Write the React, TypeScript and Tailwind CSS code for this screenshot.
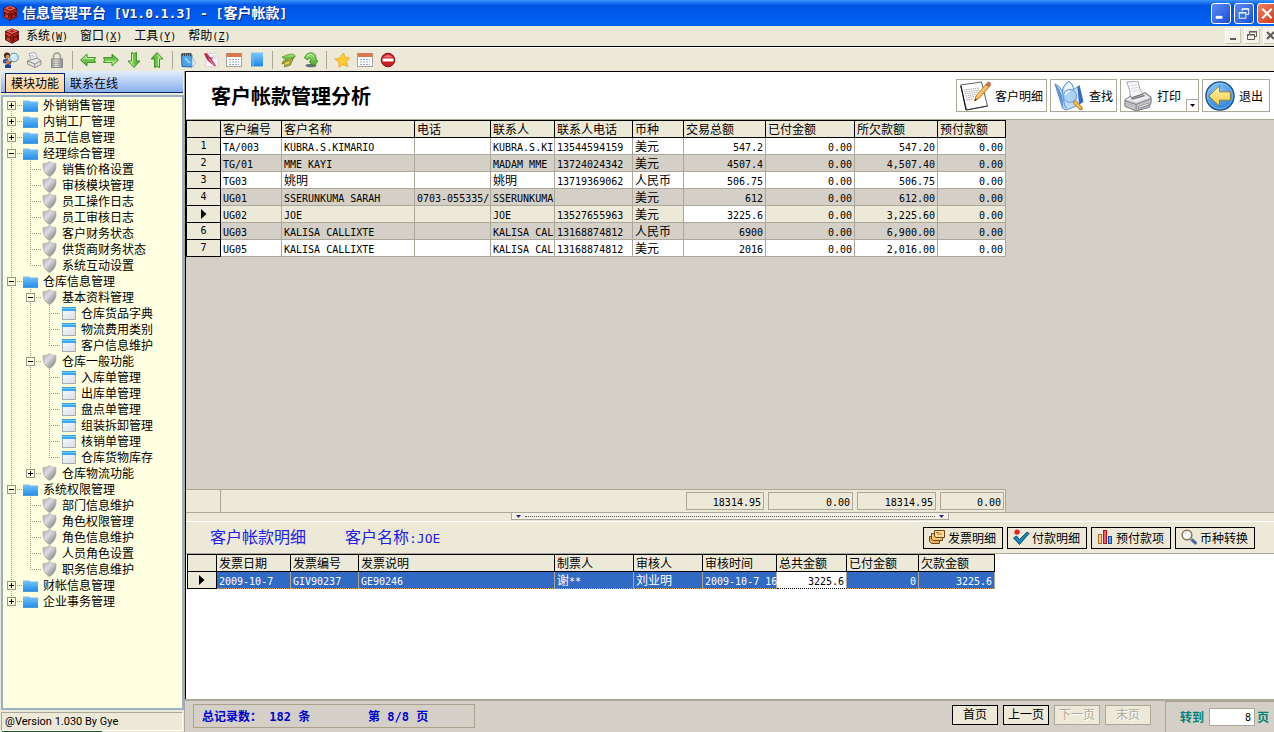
import React, { useState } from "react";

const CJK = "font-['Noto_Sans_CJK_SC',sans-serif]";

/* Renders ideographs and half-width characters with their own face and size. */
function Mixed({ text, latin = "text-[10px]" }: { text: string; latin?: string }) {
  const parts = text.match(/[\x20-\x7e]+|[^\x20-\x7e]+/g) ?? [];
  return (
    <>
      {parts.map((part, i) =>
        /^[\x20-\x7e]/.test(part) ? (
          <span key={i} className={`whitespace-pre font-['DejaVu_Sans_Mono',monospace] ${latin}`}>
            {part}
          </span>
        ) : (
          <span key={i}>{part}</span>
        )
      )}
    </>
  );
}

function Defs() {
  return (
    <svg className="absolute h-0 w-0" aria-hidden="true">
      <defs>
        <linearGradient id="folder" x1="0" y1="0" x2="0" y2="1">
          <stop offset="0" stopColor="#7cc8fc" />
          <stop offset="1" stopColor="#1c88e8" />
        </linearGradient>
        <linearGradient id="shield" x1="0" y1="0" x2="1" y2="1">
          <stop offset="0" stopColor="#a4a4a8" />
          <stop offset="0.4" stopColor="#dcdce0" />
          <stop offset="1" stopColor="#68686c" />
        </linearGradient>
        <linearGradient id="page" x1="0" y1="0" x2="1" y2="1">
          <stop offset="0" stopColor="#ffffff" />
          <stop offset="1" stopColor="#d5d9e2" />
        </linearGradient>
        <linearGradient id="green" x1="0" y1="0" x2="0" y2="1">
          <stop offset="0" stopColor="#a6e878" />
          <stop offset="1" stopColor="#3fa827" />
        </linearGradient>
        <linearGradient id="metal" x1="0" y1="0" x2="1" y2="0">
          <stop offset="0" stopColor="#8c8c88" />
          <stop offset="0.4" stopColor="#e8e8e4" />
          <stop offset="1" stopColor="#82827e" />
        </linearGradient>
        <radialGradient id="blueBall" cx="0.4" cy="0.3" r="0.7">
          <stop offset="0" stopColor="#8cccfc" />
          <stop offset="1" stopColor="#2880dc" />
        </radialGradient>
        <linearGradient id="gold" x1="0" y1="0" x2="0" y2="1">
          <stop offset="0" stopColor="#fff4b0" />
          <stop offset="1" stopColor="#fcc840" />
        </linearGradient>
      </defs>
    </svg>
  );
}

function Cube() {
  return (
    <svg viewBox="0 0 16 16" className="h-4 w-4 shrink-0" aria-hidden="true">
      <path d="M8 .5 15 3v9l-7 3.800L1 12V3z" fill="#4c100a" />
      <path d="M8 1 14 3.200 8 6 2 3.200z" fill="#ec6c60" />
      <path d="M1.600 4 7.600 6.800v8L1.600 11.600z" fill="#e03424" />
      <path d="M14.400 4 8.400 6.800v8l6-3.200z" fill="#b02014" />
      <path d="M2.600 11V7l1.800 2.400L6.600 8.500V13M9.400 13V8.500l2 1 2-2.500V11" fill="none" stroke="#3c0804" strokeWidth=".9" />
      <path d="M5 3.200 8 2l3 1.200-3 1.200z" fill="#a82016" />
    </svg>
  );
}

type ToolName =
  | "people" | "printer" | "lock" | "left" | "right" | "down" | "up" | "note" | "edit"
  | "calendar" | "book" | "redo" | "refresh" | "star" | "stop";

function Arrow({ turn }: { turn: number }) {
  return (
    <g transform={`rotate(${turn} 8 8)`}>
      <path d="M.5 8 7 2v3.500h8.500l-1 2.500 1 2.500H7V14z" fill="url(#green)" stroke="#3b8a24" strokeWidth=".9" strokeLinejoin="round" />
      <path d="M2.500 7.500 6 4.500v2h8" fill="none" stroke="#d0f8b8" strokeWidth=".8" />
    </g>
  );
}

const toolArt: Record<ToolName, React.ReactNode> = {
  people: (
    <>
      <circle cx="4" cy="3.500" r="3" fill="#3a1c12" />
      <circle cx="4.500" cy="4.500" r="1.900" fill="#d88a4a" />
      <path d="M0 11V8q3-2.500 6 0v4z" fill="#2c56b8" />
      <circle cx="5" cy="10" r="2" fill="#d8803a" />
      <path d="M2 16v-3q3-2 6 0v3z" fill="#20409c" />
      <path d="m8.500 9-2 3" stroke="#5a4a3a" strokeWidth="1.500" />
      <circle cx="11" cy="5.500" r="4.300" fill="#cfeaf6" stroke="#5c8ca8" />
      <path d="M8.500 5q1-2.300 3-2.300" stroke="#fff" fill="none" />
    </>
  ),
  printer: (
    <>
      <path d="M3 1.500 9 .5l2.500 6-6.500 2z" fill="#fff" stroke="#a8a8a8" />
      <path d="m1.500 9 4-1.500 6-1.500 3.500 3v3.500l-6 3L1.500 12z" fill="#e4e4e4" stroke="#8c8c8c" />
      <path d="m1.500 9 7.300 3 6-3M8.800 12v3" fill="none" stroke="#8c8c8c" />
      <path d="M4.500 3.500 8 3M5 5l3.500-.5" stroke="#bbb" />
    </>
  ),
  lock: (
    <>
      <path d="M4.500 8V4.500a3.500 3.500 0 0 1 7 0V8" fill="none" stroke="#a6a6a2" strokeWidth="1.800" />
      <rect x="2.500" y="7" width="11" height="8.500" fill="url(#metal)" stroke="#8a8a86" />
      <path d="M3 9.500h10M3 11.500h10M3 13.500h10" stroke="#9c9c98" strokeWidth=".7" />
    </>
  ),
  left: <Arrow turn={0} />,
  right: <Arrow turn={180} />,
  down: <Arrow turn={-90} />,
  up: <Arrow turn={90} />,
  note: (
    <>
      <path d="m1.500 2 9.500-.5 2.500 11L12 15l-10-.5z" fill="#4ca4e8" stroke="#2465a0" />
      <path d="m12 3 3.300 9-3.200 3z" fill="#f0f4f8" stroke="#8099b0" strokeWidth=".6" />
      <path d="M2.500 1v3M4.500 1v3M6.500 1v3M8.500 1v3M10.500 1v3" stroke="#333" strokeWidth=".8" />
      <path d="m5 6 5 5" stroke="#90d0f8" strokeWidth="2" />
    </>
  ),
  edit: (
    <>
      <path d="M3 1.500h12v13H3z" fill="#fbfbfd" stroke="#d0c8d0" strokeWidth=".7" />
      <path d="M1 1.500 4 1l4 5 5 7.500-1.500.7L5 9z" fill="#c83c58" />
      <path d="M1 1.500 5 9l-.5-5z" fill="#883048" />
      <path d="m5 5 6 8" stroke="#f098a8" strokeWidth=".8" />
      <path d="M4 6h6" stroke="#903048" />
      <path d="M9 4h5M10 6h4" stroke="#c8c8d8" />
    </>
  ),
  calendar: (
    <>
      <rect x=".5" y="1.500" width="15" height="13" fill="#fff" stroke="#a8a4a0" />
      <rect x=".5" y="1" width="15" height="4" fill="#d8784c" />
      <path d="M3 7.500h10M3 10h10M3 12.500h10" stroke="#98a8c0" strokeWidth="1.200" strokeDasharray="2 1" />
    </>
  ),
  book: (
    <>
      <rect x="2" y=".5" width="12" height="14" fill="url(#folder)" />
      <path d="M4 1v13" stroke="#78c0f4" />
      <path d="M2.500 14.500h11" stroke="#a8b8c8" />
    </>
  ),
  redo: (
    <>
      <path d="M2 5 8 2.500l5-.5 2.500 2-4 5-1-2.500-5 1.500z" fill="url(#green)" stroke="#5a8c20" strokeWidth=".7" />
      <path d="m13.500 5-3 8-6 2 .5-4-3 1 1-3 7-1z" fill="#b0ac34" stroke="#6c7014" strokeWidth=".7" />
      <path d="m5 12 4-1.500" stroke="#f4f0a0" />
    </>
  ),
  refresh: (
    <>
      <ellipse cx="8" cy="13.500" rx="5.500" ry="1.800" fill="#68707c" />
      <path d="M1.500 6Q3 .5 9 .8 13.500 2 13 7.500l2 1.500-4 5-5-4.500 2-1Q8 6 5.500 6l-1 2z" fill="url(#green)" stroke="#2a8818" strokeWidth=".8" />
      <path d="M4 4Q6 2 9 2.500" stroke="#d0f8b0" fill="none" />
    </>
  ),
  star: (
    <path d="m9.500 1 1.300 4.200 4.700.8-3 3.500 1.300 5-4.800-2-4 2.700V10L.8 7.200l4.800-1z" fill="#fccc34" stroke="#ecac1c" strokeLinejoin="round" />
  ),
  stop: (
    <>
      <circle cx="8" cy="8" r="6.800" fill="#c81c24" stroke="#8c1018" />
      <path d="M3 5.500Q8 0 13 5.500z" fill="#e87078" />
      <rect x="2.500" y="6.500" width="11" height="3" fill="#fff" />
    </>
  ),
};

function ToolButton({ name, label }: { name: ToolName; label: string }) {
  return (
    <button type="button" aria-label={label} className="h-4 w-4 shrink-0">
      <svg viewBox="0 0 16 16" className="h-4 w-4" aria-hidden="true">
        {toolArt[name]}
      </svg>
    </button>
  );
}

const toolGroups: [ToolName, string][][] = [
  [["people", "用户"], ["printer", "打印"], ["lock", "锁定"]],
  [["left", "后退"], ["right", "前进"], ["down", "向下"], ["up", "向上"]],
  [["note", "记事"], ["edit", "编辑"], ["calendar", "日历"], ["book", "帮助"]],
  [["redo", "重做"], ["refresh", "刷新"]],
  [["star", "收藏"], ["calendar", "日程"], ["stop", "停止"]],
];

/* ---------- navigation tree ---------- */

type Node = { label: string; children?: Node[]; closed?: boolean };

const tree: Node[] = [
  { label: "外销销售管理", closed: true },
  { label: "内销工厂管理", closed: true },
  { label: "员工信息管理", closed: true },
  {
    label: "经理综合管理",
    children: ["销售价格设置", "审核模块管理", "员工操作日志", "员工审核日志", "客户财务状态", "供货商财务状态", "系统互动设置"].map((label) => ({ label })),
  },
  {
    label: "仓库信息管理",
    children: [
      { label: "基本资料管理", children: ["仓库货品字典", "物流费用类别", "客户信息维护"].map((label) => ({ label })) },
      {
        label: "仓库一般功能",
        children: ["入库单管理", "出库单管理", "盘点单管理", "组装拆卸管理", "核销单管理", "仓库货物库存"].map((label) => ({ label })),
      },
      { label: "仓库物流功能", closed: true },
    ],
  },
  {
    label: "系统权限管理",
    children: ["部门信息维护", "角色权限管理", "角色信息维护", "人员角色设置", "职务信息维护"].map((label) => ({ label })),
  },
  { label: "财帐信息管理", closed: true },
  { label: "企业事务管理", closed: true },
];

const guide = { stroke: "#a09880", strokeWidth: 1, strokeDasharray: "1 1" };

function NodeIcon({ depth }: { depth: number }) {
  if (depth === 0)
    return (
      <svg viewBox="0 0 19 16" className="h-4 w-[19px] shrink-0" aria-hidden="true">
        <path d="M1 3h6l1 1h8v11H1z" fill="url(#folder)" />
        <path d="M1 14.500h15" stroke="#4c9ce0" fill="none" />
        <path d="M1 3.500h6M8 4.500h8" stroke="#c4dcec" />
      </svg>
    );
  if (depth === 1)
    return (
      <svg viewBox="0 0 19 16" className="h-4 w-[19px] shrink-0" aria-hidden="true">
        <path d="M2 2.500Q6 3 8.500.3 11 3 15 2.500 16.200 11 8.500 15.800.8 11 2 2.500z" fill="url(#shield)" stroke="#a8a8a8" strokeWidth=".6" />
      </svg>
    );
  return (
    <svg viewBox="0 0 19 16" className="h-4 w-[19px] shrink-0" aria-hidden="true">
      <rect x="2" y="2" width="14" height="13" fill="url(#page)" />
      <path d="M2.500 5v10M2 14.500h14M15.500 5v10" stroke="#a4acb8" />
      <rect x="2" y="2" width="14" height="4" fill="#38a8f0" />
      <path d="M2 2.500h14" stroke="#4c98c8" />
      <path d="M2 3.500h14" stroke="#70d0fc" />
    </svg>
  );
}

function Branch({ node, guides, first, last }: { node: Node; guides: boolean[]; first: boolean; last: boolean }) {
  const [open, setOpen] = useState(!node.closed);
  const depth = guides.length;
  const parent = node.closed || !!node.children;
  return (
    <li role="treeitem" aria-expanded={parent ? open : undefined}>
      <div className="flex h-4 items-center">
        {guides.map((on, i) => (
          <svg key={i} viewBox="0 0 19 16" className="h-4 w-[19px] shrink-0" aria-hidden="true">
            {on && <line x1="8.500" y1="0" x2="8.500" y2="16" {...guide} />}
          </svg>
        ))}
        <button
          type="button"
          aria-label={node.label}
          disabled={!parent}
          onClick={() => setOpen(!open)}
          className="h-4 w-[19px] shrink-0"
        >
          <svg viewBox="0 0 19 16" className="h-4 w-[19px]" aria-hidden="true">
            <line x1="8.500" y1={first ? 8 : 0} x2="8.500" y2={last ? 8 : 16} {...guide} />
            <line x1="8" y1="8.500" x2="19" y2="8.500" {...guide} />
            {parent && (
              <>
                <rect x="4.500" y="4.500" width="8" height="8" fill="#ffffe1" stroke="#9a9484" />
                <path d={open ? "M6 8.500h5" : "M6 8.500h5M8.500 6v5"} stroke="#000" />
              </>
            )}
          </svg>
        </button>
        <NodeIcon depth={depth} />
        <span className="pl-0.5 whitespace-nowrap">{node.label}</span>
      </div>
      {open && node.children && (
        <ul role="group">
          {node.children.map((child, i) => (
            <Branch key={child.label} node={child} guides={[...guides, !last]} first={false} last={i === node.children!.length - 1} />
          ))}
        </ul>
      )}
    </li>
  );
}

function Sidebar() {
  return (
    <aside className="flex w-[185px] shrink-0 flex-col border-r border-[#aca899] bg-[#ece9d8] pl-px">
      <div role="tablist" className="mr-px flex h-[22px] items-end border-b border-[#0a246a] bg-gradient-to-b from-[#e4eefc] to-[#88b0ec] pl-1">
        <button role="tab" aria-selected="true" type="button" className="h-[19px] w-[60px] border border-b-0 border-[#0a246a] bg-gradient-to-b from-[#ffe8cc] to-[#ffcf98] leading-[18px]">
          模块功能
        </button>
        <button role="tab" aria-selected="false" type="button" className="h-[19px] w-[58px] leading-[18px]">
          联系在线
        </button>
      </div>
      <nav aria-label="模块功能" className="mt-0.5 flex-1 border-2 border-[#9ab0c4] bg-[#ffffe1]">
        <ul role="tree" className="leading-4">
          {tree.map((n, i) => (
            <Branch key={n.label} node={n} guides={[]} first={i === 0} last={i === tree.length - 1} />
          ))}
        </ul>
      </nav>
      <div className="mt-0.5 mr-px h-[19px] border border-[#aca899] border-r-white border-b-white pl-[3px] font-[Roboto,sans-serif] text-[11px] leading-[18px]">
        @Version 1.030 By Gye
      </div>
      <div className="ml-px h-px w-[100px] bg-[#1c5c2c]" />
    </aside>
  );
}

/* ---------- account grid ---------- */

type Column = { title: string; width: string; right?: boolean };

const accountColumns: Column[] = [
  { title: "客户编号", width: "w-[61px]" },
  { title: "客户名称", width: "w-[133px]" },
  { title: "电话", width: "w-[76px]" },
  { title: "联系人", width: "w-[64px]" },
  { title: "联系人电话", width: "w-[78px]" },
  { title: "币种", width: "w-[51px]" },
  { title: "交易总额", width: "w-[82px]", right: true },
  { title: "已付金额", width: "w-[89px]", right: true },
  { title: "所欠款额", width: "w-[83px]", right: true },
  { title: "预付款额", width: "w-[68px]", right: true },
];

const accounts: string[][] = [
  ["TA/003", "KUBRA.S.KIMARIO", "", "KUBRA.S.KI", "13544594159", "美元", "547.2", "0.00", "547.20", "0.00"],
  ["TG/01", "MME KAYI", "", "MADAM MME", "13724024342", "美元", "4507.4", "0.00", "4,507.40", "0.00"],
  ["TG03", "姚明", "", "姚明", "13719369062", "人民币", "506.75", "0.00", "506.75", "0.00"],
  ["UG01", "SSERUNKUMA SARAH", "0703-055335/", "SSERUNKUMA", "", "美元", "612", "0.00", "612.00", "0.00"],
  ["UG02", "JOE", "", "JOE", "13527655963", "美元", "3225.6", "0.00", "3,225.60", "0.00"],
  ["UG03", "KALISA CALLIXTE", "", "KALISA CAL", "13168874812", "人民币", "6900", "0.00", "6,900.00", "0.00"],
  ["UG05", "KALISA CALLIXTE", "", "KALISA CAL", "13168874812", "美元", "2016", "0.00", "2,016.00", "0.00"],
];

const detailColumns: Column[] = [
  { title: "发票日期", width: "w-[74px]" },
  { title: "发票编号", width: "w-[68px]" },
  { title: "发票说明", width: "w-[196px]" },
  { title: "制票人", width: "w-[79px]" },
  { title: "审核人", width: "w-[69px]" },
  { title: "审核时间", width: "w-[74px]" },
  { title: "总共金额", width: "w-[70px]", right: true },
  { title: "已付金额", width: "w-[72px]", right: true },
  { title: "欠款金额", width: "w-[76px]", right: true },
];

const details: string[][] = [["2009-10-7", "GIV90237", "GE90246", "谢**", "刘业明", "2009-10-7 16", "3225.6", "0", "3225.6"]];

function Pointer() {
  return (
    <svg viewBox="0 0 6 10" className="mx-auto h-2.5 w-1.5" aria-hidden="true">
      <path d="M0 0 5.500 5 0 10z" fill="#000" />
    </svg>
  );
}

function HeadRow({ columns, lead }: { columns: Column[]; lead: string }) {
  return (
    <thead>
      <tr className="h-[18px] bg-[#ece9d8]">
        <th scope="col" aria-label="行" className={`${lead} h-[18px] border border-black p-0`} />
        {columns.map((c) => (
          <th key={c.title} scope="col" className={`${c.width} h-[18px] border-y border-r border-black p-0 pl-[2px] text-left font-normal whitespace-nowrap`}>
            <div className="h-4 leading-4">{c.title}</div>
          </th>
        ))}
      </tr>
    </thead>
  );
}

function AccountTable() {
  return (
    <table className="w-[820px] table-fixed border-separate border-spacing-0">
      <HeadRow columns={accountColumns} lead="w-[35px]" />
      <tbody>
        {accounts.map((row, r) => {
          const current = r === 4;
          const fill = current ? "bg-[#ece9d8]" : r % 2 ? "bg-[#d4d0c8]" : "bg-white";
          return (
            <tr key={r} className={`h-[17px] ${fill}`}>
              <th scope="row" className="h-[17px] border-x border-b border-black bg-[#ece9d8] p-0 text-center font-normal">
                <div className="flex h-4 items-center justify-center leading-4">{current ? <Pointer /> : <Mixed text={String(r + 1)} />}</div>
              </th>
              {row.map((cell, c) => (
                <td
                  key={c}
                  className={`h-[17px] border-r border-b border-[#aca899] p-0 whitespace-nowrap ${current && c === 6 ? "bg-white" : ""} ${accountColumns[c].right ? "pr-[2px] text-right" : "pl-[2px]"}`}
                >
                  <div className="h-4 leading-[15px]">
                    <Mixed text={cell} />
                  </div>
                </td>
              ))}
            </tr>
          );
        })}
      </tbody>
    </table>
  );
}

function DetailTable() {
  return (
    <table className="ml-px w-[808px] table-fixed border-separate border-spacing-0">
      <HeadRow columns={detailColumns} lead="w-[30px]" />
      <tbody>
        {details.map((row, r) => (
          <tr key={r} className="h-[17px] bg-[#316ac5] text-white">
            <th scope="row" className="h-[17px] border-x border-b border-black bg-[#ece9d8] p-0">
              <Pointer />
            </th>
            {row.map((cell, c) => (
              <td
                key={c}
                className={`h-[17px] border-r border-b border-r-[#aca899] p-0 whitespace-nowrap ${c === 6 ? "border-b-black bg-white text-black [border-bottom-style:dotted]" : "border-b-[#d8a860] [border-bottom-style:dotted]"} ${detailColumns[c].right ? "pr-[2px] text-right" : "pl-[2px]"}`}
              >
                <div className="h-4 leading-[15px]">
                  <Mixed text={cell} />
                </div>
              </td>
            ))}
          </tr>
        ))}
      </tbody>
    </table>
  );
}

/* ---------- large button drawings ---------- */

function PaperPencil() {
  return (
    <svg viewBox="0 0 32 30" className="h-[30px] w-8" aria-hidden="true">
      <path d="m1.500 4 21-3 6 24-21 4z" fill="#fff" stroke="#4c4c50" strokeWidth=".9" />
      <path d="m2 5 5 24" stroke="#111" strokeWidth="1.200" />
      <path d="m7.500 29 21-4" stroke="#333" />
      <path d="m5 9 15-2M5.500 11l15-2M6 13l13-2M6.500 15l11-1.500M7 17l9-1.500M7.500 19l7-1" stroke="#a8a8ac" strokeDasharray="1.500 .7" />
      <path d="m17 15 11-13 3.500 2.500-11 12.500-5 3z" fill="#f8b44c" stroke="#b8742c" strokeWidth=".8" />
      <path d="m26 4 3-3.500q3 0 3 3L30 6z" fill="#c47860" />
      <path d="m18 16 9.500-11" stroke="#ffe098" />
      <path d="m15.500 20 1-2.500 1.500 1.300z" fill="#222" />
    </svg>
  );
}

function BookSearch() {
  return (
    <svg viewBox="0 0 32 32" className="h-[30px] w-8" aria-hidden="true">
      <path d="M1 3q5 2 8 8 0-6 7-11 5 4 5 9l6-4 4 17-8 5-10 4-4-2z" fill="#c4dcf8" stroke="#3870b4" strokeWidth=".8" />
      <path d="m1 3 5 16 4 10-1-12q-3-9-8-14z" fill="#5c94dc" />
      <path d="m9 11 2 14 2 4" stroke="#4c84cc" fill="none" />
      <path d="m25 6 2-1 4 17-4 3z" fill="#3468c0" />
      <path d="M16 1q-5 5-5 9l9-1q0-4-4-8z" fill="#f0f6fe" />
      <circle cx="17" cy="16" r="7" fill="#a8d0f4" fillOpacity=".85" stroke="#7ca8dc" strokeWidth="1.300" />
      <path d="M12 15q1-4 5-4" stroke="#fff" strokeWidth="1.500" fill="none" />
      <path d="m22.500 23 6 6" stroke="#b8741c" strokeWidth="4.200" strokeLinecap="round" />
      <path d="m22.500 23 5.500 5.500" stroke="#fcc44c" strokeWidth="2.500" strokeLinecap="round" />
    </svg>
  );
}

function BigPrinter() {
  return (
    <svg viewBox="0 0 30 32" className="h-[30px] w-[30px]" aria-hidden="true">
      <path d="m3 1 12-1q1 8 5 14L7 18Q7 10 3 1z" fill="#f6f6f8" stroke="#98989c" strokeWidth=".9" />
      <path d="m7 5 7-1M8 8l7-1.300M9 11l7-1.300" stroke="#d8d8dc" />
      <path d="m1 20 6-4 1 2 12-4 2-2 7 5v6l-2 5-14 4L1 27z" fill="#c4c4c8" stroke="#68686c" strokeWidth=".9" />
      <path d="m2 20 5-3 2 2 12-4 1-1 6 4-15 5z" fill="#ececf0" />
      <path d="m7 19 14-4 2 1-14 4z" fill="#77777c" />
      <path d="m1 21 12 4 16-6M13 25v6" stroke="#808084" fill="none" />
      <path d="m15 27 12-4v3l-12 4z" fill="#8c8c90" />
      <path d="m16 28 10-3.500" stroke="#fff" />
      <path d="m3 24 7 2.500" stroke="#b4b4b8" />
    </svg>
  );
}

function ExitBall() {
  return (
    <svg viewBox="0 0 32 32" className="h-[30px] w-[30px]" aria-hidden="true">
      <circle cx="16" cy="16" r="15" fill="url(#blueBall)" stroke="#15508c" strokeWidth="1.400" />
      <circle cx="16" cy="16" r="13.500" fill="none" stroke="#a8d4f8" strokeOpacity=".6" />
      <path d="M4 16 15.500 5v6.500H27v9H15.500V27z" fill="url(#gold)" stroke="#8c7434" strokeWidth="1" strokeLinejoin="round" />
    </svg>
  );
}

const bigButton = "flex h-[33px] shrink-0 items-center border border-[#aca899] bg-white whitespace-nowrap";

function PageHeader() {
  return (
    <header className="flex h-12 shrink-0 items-center justify-between border-b border-[#aca899] bg-white pr-1 pl-[25px]">
      <h1 className="text-xl leading-6 font-bold">客户帐款管理分析</h1>
      <div className="flex gap-[3px]">
        <button type="button" className={`${bigButton} w-[91px] gap-1 pl-0.5`}>
          <PaperPencil />
          客户明细
        </button>
        <button type="button" className={`${bigButton} w-[67px] gap-1 pl-0.5`}>
          <BookSearch />
          查找
        </button>
        <div className={`${bigButton} w-[79px]`}>
          <button type="button" className="flex flex-1 items-center gap-1 pl-0.5">
            <BigPrinter />
            打印
          </button>
          <button type="button" aria-label="打印选项" className="-mr-px -mb-px flex h-[13px] w-[13px] items-center justify-center self-end border border-[#aca899]">
            <svg viewBox="0 0 5 3" className="h-[3px] w-[5px]" aria-hidden="true">
              <path d="M0 0h5L2.500 3z" />
            </svg>
          </button>
        </div>
        <button type="button" className={`${bigButton} w-[68px] gap-1 pl-0.5`}>
          <ExitBall />
          退出
        </button>
      </div>
    </header>
  );
}

const detailArt: Record<string, React.ReactNode> = {
  发票明细: (
    <>
      <path d="M.5 7.500h10v7h-8l-2-2z" fill="#e8b058" stroke="#6c4414" />
      <path d="M2.500 4.500h11v7h-9l-2-1.500z" fill="#f4c878" stroke="#6c4414" />
      <path d="M5.500 1.500h10v7h-9l-1-1.500z" fill="#fcdc98" stroke="#6c4414" />
      <path d="M8 5h5M7 3.500h3" stroke="#b07828" />
    </>
  ),
  付款明细: (
    <>
      <circle cx="4" cy="3" r="2.600" fill="#f01818" />
      <path d="m.5 9 3-2 3 3.500L14 3l2 1.500L6.500 15.500z" fill="#1888b8" stroke="#0c4468" strokeWidth=".9" />
    </>
  ),
  预付款项: (
    <>
      <rect x="1.500" y="5.500" width="3" height="9" fill="#fcd0a0" stroke="#b06820" />
      <rect x="6.500" y="1.500" width="3" height="13" fill="#f06060" stroke="#a81818" />
      <rect x="11.500" y="7.500" width="3" height="7" fill="#60a0f0" stroke="#1848a0" />
    </>
  ),
  币种转换: (
    <>
      <circle cx="6" cy="6" r="4.800" fill="#fcfcf8" stroke="#887858" strokeWidth="1.500" />
      <path d="M3.500 5.500Q4 3.500 6 3.300" stroke="#c8d8e8" fill="none" />
      <path d="m10.500 10.500 4 3.500" stroke="#4868a8" strokeWidth="3" strokeLinecap="round" />
      <path d="m9 9 2 2" stroke="#a89870" strokeWidth="2" />
    </>
  ),
};

function DetailHeader() {
  return (
    <div className="flex h-8 shrink-0 items-center justify-between border-b border-[#aca899] pr-[19px] pl-6">
      <h2 className="flex gap-[39px] text-base leading-6 text-[#2020e8]">
        <span>客户帐款明细</span>
        <span>
          <Mixed text="客户名称:JOE" latin="text-[13px]" />
        </span>
      </h2>
      <div className="flex gap-1">
        {Object.keys(detailArt).map((label) => (
          <button key={label} type="button" className="flex h-[22px] w-20 items-center gap-0.5 border border-black pl-[5px] leading-4 whitespace-nowrap">
            <svg viewBox="0 0 17 17" className="h-[17px] w-[17px] shrink-0" aria-hidden="true">
              {detailArt[label]}
            </svg>
            {label}
          </button>
        ))}
      </div>
    </div>
  );
}

function Splitter() {
  return (
    <div role="separator" className="flex h-[9px] shrink-0 justify-center border-b border-white bg-[#ece9d8]">
      <div className="flex h-[7px] w-[438px] items-center justify-between border border-t-0 border-[#aca899] bg-[#f4f2e8] px-1">
        <svg viewBox="0 0 5 3" className="h-[3px] w-[5px]" aria-hidden="true"><path d="M0 0h5L2.500 3z" fill="#28287c" /></svg>
        <div className="mx-1 h-px flex-1 border-t border-dotted border-[#55554c]" />
        <svg viewBox="0 0 5 3" className="h-[3px] w-[5px]" aria-hidden="true"><path d="M0 0h5L2.500 3z" fill="#28287c" /></svg>
      </div>
    </div>
  );
}

function Totals() {
  const boxes: [string, string][] = [
    ["w-[78px]", "18314.95"],
    ["w-[85px]", "0.00"],
    ["w-[79px]", "18314.95"],
    ["w-[64px]", "0.00"],
  ];
  return (
    <div className="flex h-6 shrink-0 border-b border-[#aca899]">
      <div className="flex w-[820px] items-center gap-1 border-t border-r border-[#aca899] bg-[#ece9d8] pr-px">
        <div className="w-[35px] self-stretch border-r border-[#aca899]" />
        <div className="flex-1" />
        {boxes.map(([width, value], i) => (
          <output key={i} className={`${width} h-[18px] border border-[#aca899] pr-[2px] text-right leading-[15px]`}>
            <Mixed text={value} />
          </output>
        ))}
      </div>
    </div>
  );
}

function Footer() {
  const pages: [string, boolean][] = [["首页", true], ["上一页", true], ["下一页", false], ["末页", false]];
  return (
    <footer className="flex h-[33px] shrink-0 border-t-2 border-[#aca899] bg-[#d4d0c8]">
      <div className="mt-[3px] ml-2 flex h-6 w-[282px] items-center border border-[#aca08c] pl-2 font-bold whitespace-nowrap text-[#0000d0]">
        <span className="w-[166px]">
          总记录数：<Mixed text=" 182 " latin="text-xs" />条
        </span>
        <span>
          第<Mixed text=" 8/8 " latin="text-xs" />页
        </span>
      </div>
      <div className="flex-1" />
      <div className="mt-1 flex gap-[5px]">
        {pages.map(([label, on]) => (
          <button
            key={label}
            type="button"
            disabled={!on}
            className={`flex h-5 w-[46px] justify-center border bg-[#ece9d8] leading-4 ${on ? "border-black" : "border-[#aca899] text-[#aca899] [text-shadow:1px_1px_0_#fff]"}`}
          >
            {label}
          </button>
        ))}
      </div>
      <div className="ml-[14px] flex w-[109px] items-center border-t border-l border-[#aca08c] pl-[14px] font-bold text-[#008078]">
        <label htmlFor="page-number" className="w-[29px]">转到</label>
        <input id="page-number" defaultValue="8" className="mr-0.5 h-[18px] w-[46px] border border-[#aca899] bg-white pr-[3px] text-right font-['DejaVu_Sans_Mono',monospace] text-[10px] font-normal text-black" />
        <span>页</span>
      </div>
    </footer>
  );
}

function TitleBar() {
  const box = "flex h-[21px] w-5 items-center justify-center rounded-[3px] border border-white";
  return (
    <div className="flex h-[26px] shrink-0 items-center justify-between bg-gradient-to-b from-[#3c94fc] via-[#0054e3] via-20% to-[#0062f8] pl-0.5">
      <div className="flex items-center gap-1 text-sm leading-5 font-bold whitespace-nowrap text-white [text-shadow:1px_1px_0_#0a2a80]">
        <Cube />
        <span>
          <Mixed text="信息管理平台 [V1.0.1.3] - [客户帐款]" latin="text-[13px]" />
        </span>
      </div>
      <div className="-mr-[3px] flex gap-[3px]">
        <button type="button" aria-label="最小化" className={`${box} bg-gradient-to-br from-[#5c8cf4] to-[#1c4cd4]`}>
          <svg viewBox="0 0 19 19" className="h-[19px] w-[19px]" aria-hidden="true"><path d="M4 12h7v3H4z" fill="#fff" /></svg>
        </button>
        <button type="button" aria-label="还原" className={`${box} bg-gradient-to-br from-[#5c8cf4] to-[#1c4cd4]`}>
          <svg viewBox="0 0 19 19" className="h-[19px] w-[19px]" aria-hidden="true">
            <path d="M7.500 7V4.500h7v6H12M7 5h8" fill="none" stroke="#fff" />
            <path d="M4.500 8.500h7v6h-7zM4 9h8" fill="none" stroke="#fff" />
          </svg>
        </button>
        <button type="button" aria-label="关闭" className={`${box} bg-gradient-to-br from-[#f08060] to-[#cc3414]`}>
          <svg viewBox="0 0 19 19" className="h-[19px] w-[19px]" aria-hidden="true"><path d="m4.500 4.500 10 10m0-10-10 10" stroke="#fff" strokeWidth="2.200" /></svg>
        </button>
      </div>
    </div>
  );
}

function MenuBar() {
  const menus: [string, string][] = [["系统", "W"], ["窗口", "X"], ["工具", "Y"], ["帮助", "Z"]];
  const box = "h-4 w-4 border border-white border-r-[#c8c4b4] border-b-[#c8c4b4] bg-[#f4f2ea]";
  return (
    <div className="flex h-[21px] shrink-0 items-center justify-between border-b border-black pl-1">
      <div className="flex items-center gap-1.5">
        <Cube />
        <div role="menubar" className="flex gap-3">
          {menus.map(([name, key]) => (
            <button key={key} type="button" role="menuitem" className="leading-4 whitespace-nowrap">
              {name}
              <span className="font-['DejaVu_Sans_Mono',monospace] text-[10px]">
                (<u>{key}</u>)
              </span>
            </button>
          ))}
        </div>
      </div>
      <div className="-mr-[5px] mb-0.5 flex gap-[3px] self-end">
        <button type="button" aria-label="最小化子窗口" className={box}>
          <svg viewBox="0 0 14 14" className="h-3.5 w-3.5" aria-hidden="true"><path d="M4 9h6v2H4z" fill="#5c5c54" /></svg>
        </button>
        <button type="button" aria-label="还原子窗口" className={box}>
          <svg viewBox="0 0 14 14" className="h-3.5 w-3.5" aria-hidden="true">
            <path d="M4.500 5V2.500h7v5H10M4 3h8M2.500 5.500h7v5h-7zM2 6h8" fill="none" stroke="#5c5c54" />
          </svg>
        </button>
        <button type="button" aria-label="关闭子窗口" className={box}>
          <svg viewBox="0 0 14 14" className="h-3.5 w-3.5" aria-hidden="true"><path d="m3 3 7 7m0-7-7 7" stroke="#5c5c54" strokeWidth="2" /></svg>
        </button>
      </div>
    </div>
  );
}

export default function App() {
  return (
    <div className={`flex min-h-screen flex-col overflow-hidden bg-[#ece9d8] text-xs text-black ${CJK}`}>
      <Defs />
      <TitleBar />
      <MenuBar />
      <div role="toolbar" aria-label="工具栏" className="flex h-6 shrink-0 items-center gap-[7px] border-t border-white pl-[3px]">
        {toolGroups.map((group, g) => (
          <React.Fragment key={g}>
            {g > 0 && <div className="h-[18px] w-px shrink-0 bg-[#aca899]" />}
            {group.map(([name, label]) => (
              <ToolButton key={label} name={name} label={label} />
            ))}
          </React.Fragment>
        ))}
      </div>
      <div className="flex flex-1">
        <Sidebar />
        <main className="flex min-w-0 flex-1 flex-col">
          <div className="flex flex-1 flex-col border-t border-l border-black">
            <PageHeader />
            <section aria-label="客户帐款" className="flex flex-1 flex-col justify-between bg-[#d4d0c8]">
              <AccountTable />
              <Totals />
            </section>
            <Splitter />
            <DetailHeader />
            <section aria-label="客户帐款明细" className="h-[145px] shrink-0 bg-white">
              <DetailTable />
            </section>
          </div>
          <Footer />
        </main>
      </div>
    </div>
  );
}
